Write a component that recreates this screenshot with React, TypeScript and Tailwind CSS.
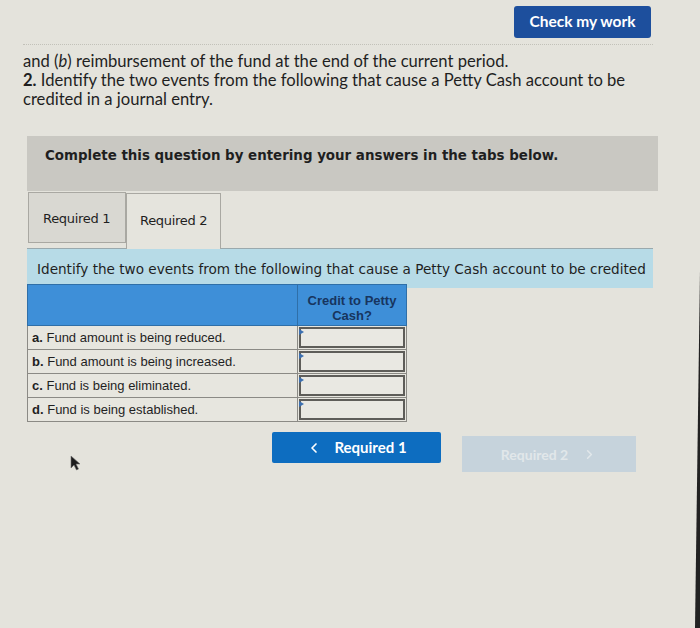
import { ChevronLeft, ChevronRight } from "lucide-react";

const rows = [
  { key: "a.", text: "Fund amount is being reduced." },
  { key: "b.", text: "Fund amount is being increased." },
  { key: "c.", text: "Fund is being eliminated." },
  { key: "d.", text: "Fund is being established." },
];

function Pointer() {
  return (
    <svg width="12" height="16" viewBox="0 0 12 16" className="absolute left-[70px] top-[455px]">
      <path d="M1 1 L1 13 L4 10 L6.5 15 L8.5 14 L6 9 L10 9 Z" fill="#1d1d1d" stroke="#6b6b6b" strokeWidth="0.6" />
    </svg>
  );
}

// dark bezel edge creeping in at the lower right
function Bezel() {
  return (
    <svg width="8" height="628" viewBox="0 0 8 628" className="absolute right-0 top-0">
      <polygon points="8,270 8,628 3,628" fill="#222" />
    </svg>
  );
}

export default function App() {
  return (
    <div className="relative w-[700px] h-[628px] overflow-hidden bg-[#e4e3dc] text-[#1f1f1f]">
      <div className="flex justify-end pt-[6px] pr-[49px]">
        <button className="w-[137px] h-[32px] rounded-[3px] bg-[#1d4f9d] text-white text-[15.5px] font-bold font-['Lato','Open_Sans',sans-serif]">
          Check my work
        </button>
      </div>

      {/* tail of the line above, cut off by the scroll */}
      <div className="ml-[23px] mt-[6px] w-[630px] border-t border-dotted border-[#c2c1b9]" />

      <div className="ml-[23px] mt-[7px] w-[630px] text-[16.6px] leading-[19px] font-['Lato','Open_Sans',sans-serif]">
        <p>
          and (<i>b</i>) reimbursement of the fund at the end of the current period.
        </p>
        <p>
          <b>2.</b> Identify the two events from the following that cause a Petty Cash account to be credited in a journal entry.
        </p>
      </div>

      <div className="ml-[27px] mt-[27px] w-[631px] h-[55px] bg-[#c9c8c2] pl-[18px] pt-[10px] font-['DejaVu_Sans','Verdana',sans-serif] text-[13.4px] font-bold">
        Complete this question by entering your answers in the tabs below.
      </div>

      <div className="ml-[28px] mt-[1px] flex items-start font-['DejaVu_Sans','Verdana',sans-serif] text-[13px] tracking-[-0.3px]">
        <div className="w-[98px] h-[51px] border border-[#a9a8a2] bg-[#d9d8d2] pl-[14px] pt-[16px]">Required 1</div>
        <div className="relative z-10 w-[95px] h-[56px] mt-[1px] border border-b-0 border-[#a9a8a2] bg-[#e5e4dd] pl-[13px] pt-[17px]">Required 2</div>
      </div>

      <div className="ml-[27px] -mt-[1px] w-[626px] h-[40px] border-t border-[#9aa9ad] bg-[#b7dbe7] pl-[10px] pt-[10px] font-['DejaVu_Sans','Verdana',sans-serif] text-[13.6px]">
        Identify the two events from the following that cause a Petty Cash account to be credited
      </div>

      <div className="ml-[27px] -mt-[4px] w-[380px] font-['Liberation_Sans','Arial',sans-serif] text-[13px]">
        <div className="flex h-[42px] bg-[#3e8fd8] border border-[#2f6fa8]">
          <div className="w-[269px]" />
          <div className="flex-1 border-l border-[#2f6fa8] pt-[8px] text-center text-[13px] font-bold leading-[15px] text-[#17355e]">
            Credit to Petty
            <br />
            Cash?
          </div>
        </div>
        {rows.map((r) => (
          <div key={r.key} className="flex h-[24px] border border-t-0 border-[#8b8a85] bg-[#e7e6df]">
            <div className="w-[269px] pl-[4px] pt-[4px] leading-[15px]">
              <b>{r.key}</b> {r.text}
            </div>
            <div className="relative flex-1 border-l border-[#8b8a85] p-[1px]">
              <div className="h-full border-2 border-[#5e5d59] bg-[#e9e8e2]" />
              <span className="absolute left-[1px] top-[3px] w-0 h-0 border-y-[3px] border-y-transparent border-l-[5px] border-l-[#3c6fb0]" />
            </div>
          </div>
        ))}
      </div>

      <div className="mt-[10px] ml-[272px] flex items-start gap-[21px] font-['Lato','Open_Sans',sans-serif]">
        <button className="flex h-[31px] w-[169px] items-center justify-center gap-[12px] rounded-[2px] bg-[#0d6dc0] text-[15px] font-bold text-white">
          <ChevronLeft size={16} strokeWidth={2.5} />
          Required 1
        </button>
        <button className="mt-[4px] flex h-[36px] w-[174px] items-center justify-center gap-[14px] bg-[#c6d3dc] text-[14px] font-bold text-[#e1e7ea]">
          Required 2
          <ChevronRight size={15} strokeWidth={2.5} />
        </button>
      </div>

      <Pointer />
      <Bezel />
    </div>
  );
}
